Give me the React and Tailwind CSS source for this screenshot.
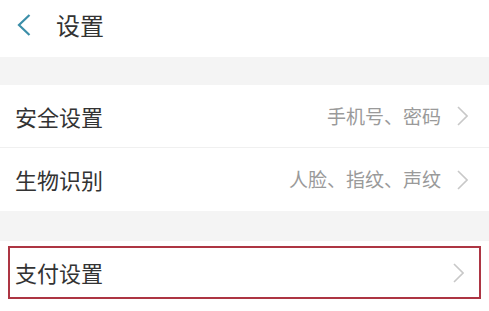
import React from 'react';

const font = { fontFamily: '"Noto Sans CJK SC", "Noto Sans", sans-serif' };

function Chevron() {
  return (
    <svg width="11" height="20" viewBox="0 0 11 20" className="shrink-0">
      <path d="M1 1 L10 10 L1 19" fill="none" stroke="#c8c8c8" strokeWidth="1.6" />
    </svg>
  );
}

function Row({ title, hint, divider }) {
  return (
    <div className="bg-white">
      <div className={`h-[63px] flex items-center justify-between pl-[15px] pr-[21px] ${divider ? 'border-b border-[#f0f0f0]' : ''}`}>
        <span className="text-[22px] text-[#333]">{title}</span>
        <div className="flex items-center gap-[16px]">
          {hint && <span className="text-[19px] text-[#9a9a9a]">{hint}</span>}
          <Chevron />
        </div>
      </div>
    </div>
  );
}

export default function App() {
  return (
    <div className="w-[489px] h-[311px] bg-[#f4f4f4] overflow-hidden" style={font}>
      <div className="h-[57px] bg-white flex items-center pl-[17px] pb-[8px]">
        <svg width="14" height="24" viewBox="0 0 14 24">
          <path d="M12.5 2 L2 12 L12.5 22" fill="none" stroke="#3b8ea8" strokeWidth="2.2" />
        </svg>
        <span className="ml-[25px] text-[24px] text-[#333]">设置</span>
      </div>
      <div className="h-[28px]" />
      <Row title="安全设置" hint="手机号、密码" divider />
      <Row title="生物识别" hint="人脸、指纹、声纹" />
      <div className="h-[30px]" />
      <div className="bg-white h-[70px] pt-[5px] px-[8px]">
        <div className="h-[53px] border-2 border-[#ad3543] flex items-center justify-between pl-[5px] pr-[15px]">
          <span className="text-[22px] text-[#333]">支付设置</span>
          <Chevron />
        </div>
      </div>
    </div>
  );
}
